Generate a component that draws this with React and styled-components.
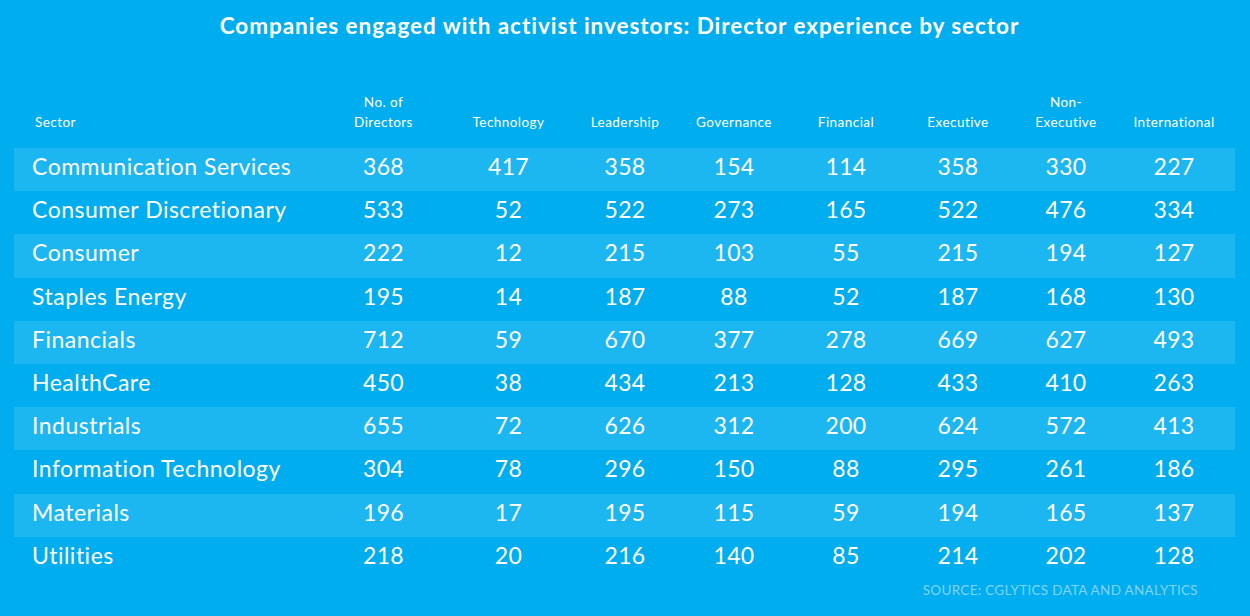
import React from 'react';
import styled, { createGlobalStyle } from 'styled-components';

const GlobalStyle = createGlobalStyle`
  html, body {
    margin: 0;
    padding: 0;
    background: #00adee;
  }
  body {
    font-family: Lato, "Open Sans", sans-serif;
    color: #ffffff;
  }
`;

const COLUMNS = '306px 127px 123px 110px 108px 116px 108px 108px 108px';

const Page = styled.div`
  width: 1250px;
  height: 616px;
  background: #00adee;
  box-sizing: border-box;
  padding: 12px 15px 0 14px;
`;

const Title = styled.h1`
  margin: 0;
  font-size: 22.5px;
  font-weight: 700;
  letter-spacing: 0.95px;
  text-align: center;
  line-height: 28px;
  padding-right: 10px;
`;

const HeaderRow = styled.div`
  display: grid;
  grid-template-columns: ${COLUMNS};
  align-items: end;
  height: 68px;
  margin-top: 40px;
  box-sizing: border-box;
  padding-bottom: 16px;
`;

const HeadCell = styled.div`
  font-size: 13.5px;
  line-height: 20px;
  letter-spacing: 0.45px;
  text-align: ${(p) => (p.$left ? 'left' : 'center')};
  padding-left: ${(p) => (p.$left ? '21px' : '0')};
`;

const Row = styled.div`
  display: grid;
  grid-template-columns: ${COLUMNS};
  align-items: center;
  height: 43.2px;
  padding-right: 7px;
  box-sizing: border-box;
  background: ${(p) => (p.$striped ? '#1cb6f1' : 'transparent')};
`;

const SectorCell = styled.div`
  font-size: 23px;
  letter-spacing: 0.5px;
  padding-left: 18px;
  padding-bottom: 7px;
  white-space: nowrap;
`;

const NumCell = styled.div`
  font-size: 23px;
  letter-spacing: 0.3px;
  padding-bottom: 7px;
  text-align: center;
`;

const Source = styled.div`
  text-align: right;
  padding-right: 37px;
  margin-top: 2px;
  font-size: 13.5px;
  letter-spacing: 0.3px;
  color: #80d4f6;
`;

const HEADERS = [
  'No. of\nDirectors',
  'Technology',
  'Leadership',
  'Governance',
  'Financial',
  'Executive',
  'Non-\nExecutive',
  'International',
];

const ROWS = [
  ['Communication Services', 368, 417, 358, 154, 114, 358, 330, 227],
  ['Consumer Discretionary', 533, 52, 522, 273, 165, 522, 476, 334],
  ['Consumer', 222, 12, 215, 103, 55, 215, 194, 127],
  ['Staples Energy', 195, 14, 187, 88, 52, 187, 168, 130],
  ['Financials', 712, 59, 670, 377, 278, 669, 627, 493],
  ['HealthCare', 450, 38, 434, 213, 128, 433, 410, 263],
  ['Industrials', 655, 72, 626, 312, 200, 624, 572, 413],
  ['Information Technology', 304, 78, 296, 150, 88, 295, 261, 186],
  ['Materials', 196, 17, 195, 115, 59, 194, 165, 137],
  ['Utilities', 218, 20, 216, 140, 85, 214, 202, 128],
];

export default function App() {
  return (
    <>
      <GlobalStyle />
      <Page>
        <Title>Companies engaged with activist investors: Director experience by sector</Title>
        <HeaderRow>
          <HeadCell $left>Sector</HeadCell>
          {HEADERS.map((h) => (
            <HeadCell key={h}>
              {h.split('\n').map((line, i) => (
                <div key={i}>{line}</div>
              ))}
            </HeadCell>
          ))}
        </HeaderRow>
        {ROWS.map((row, i) => (
          <Row key={row[0]} $striped={i % 2 === 0}>
            <SectorCell>{row[0]}</SectorCell>
            {row.slice(1).map((v, j) => (
              <NumCell key={j}>{v}</NumCell>
            ))}
          </Row>
        ))}
        <Source>SOURCE: CGLYTICS DATA AND ANALYTICS</Source>
      </Page>
    </>
  );
}
